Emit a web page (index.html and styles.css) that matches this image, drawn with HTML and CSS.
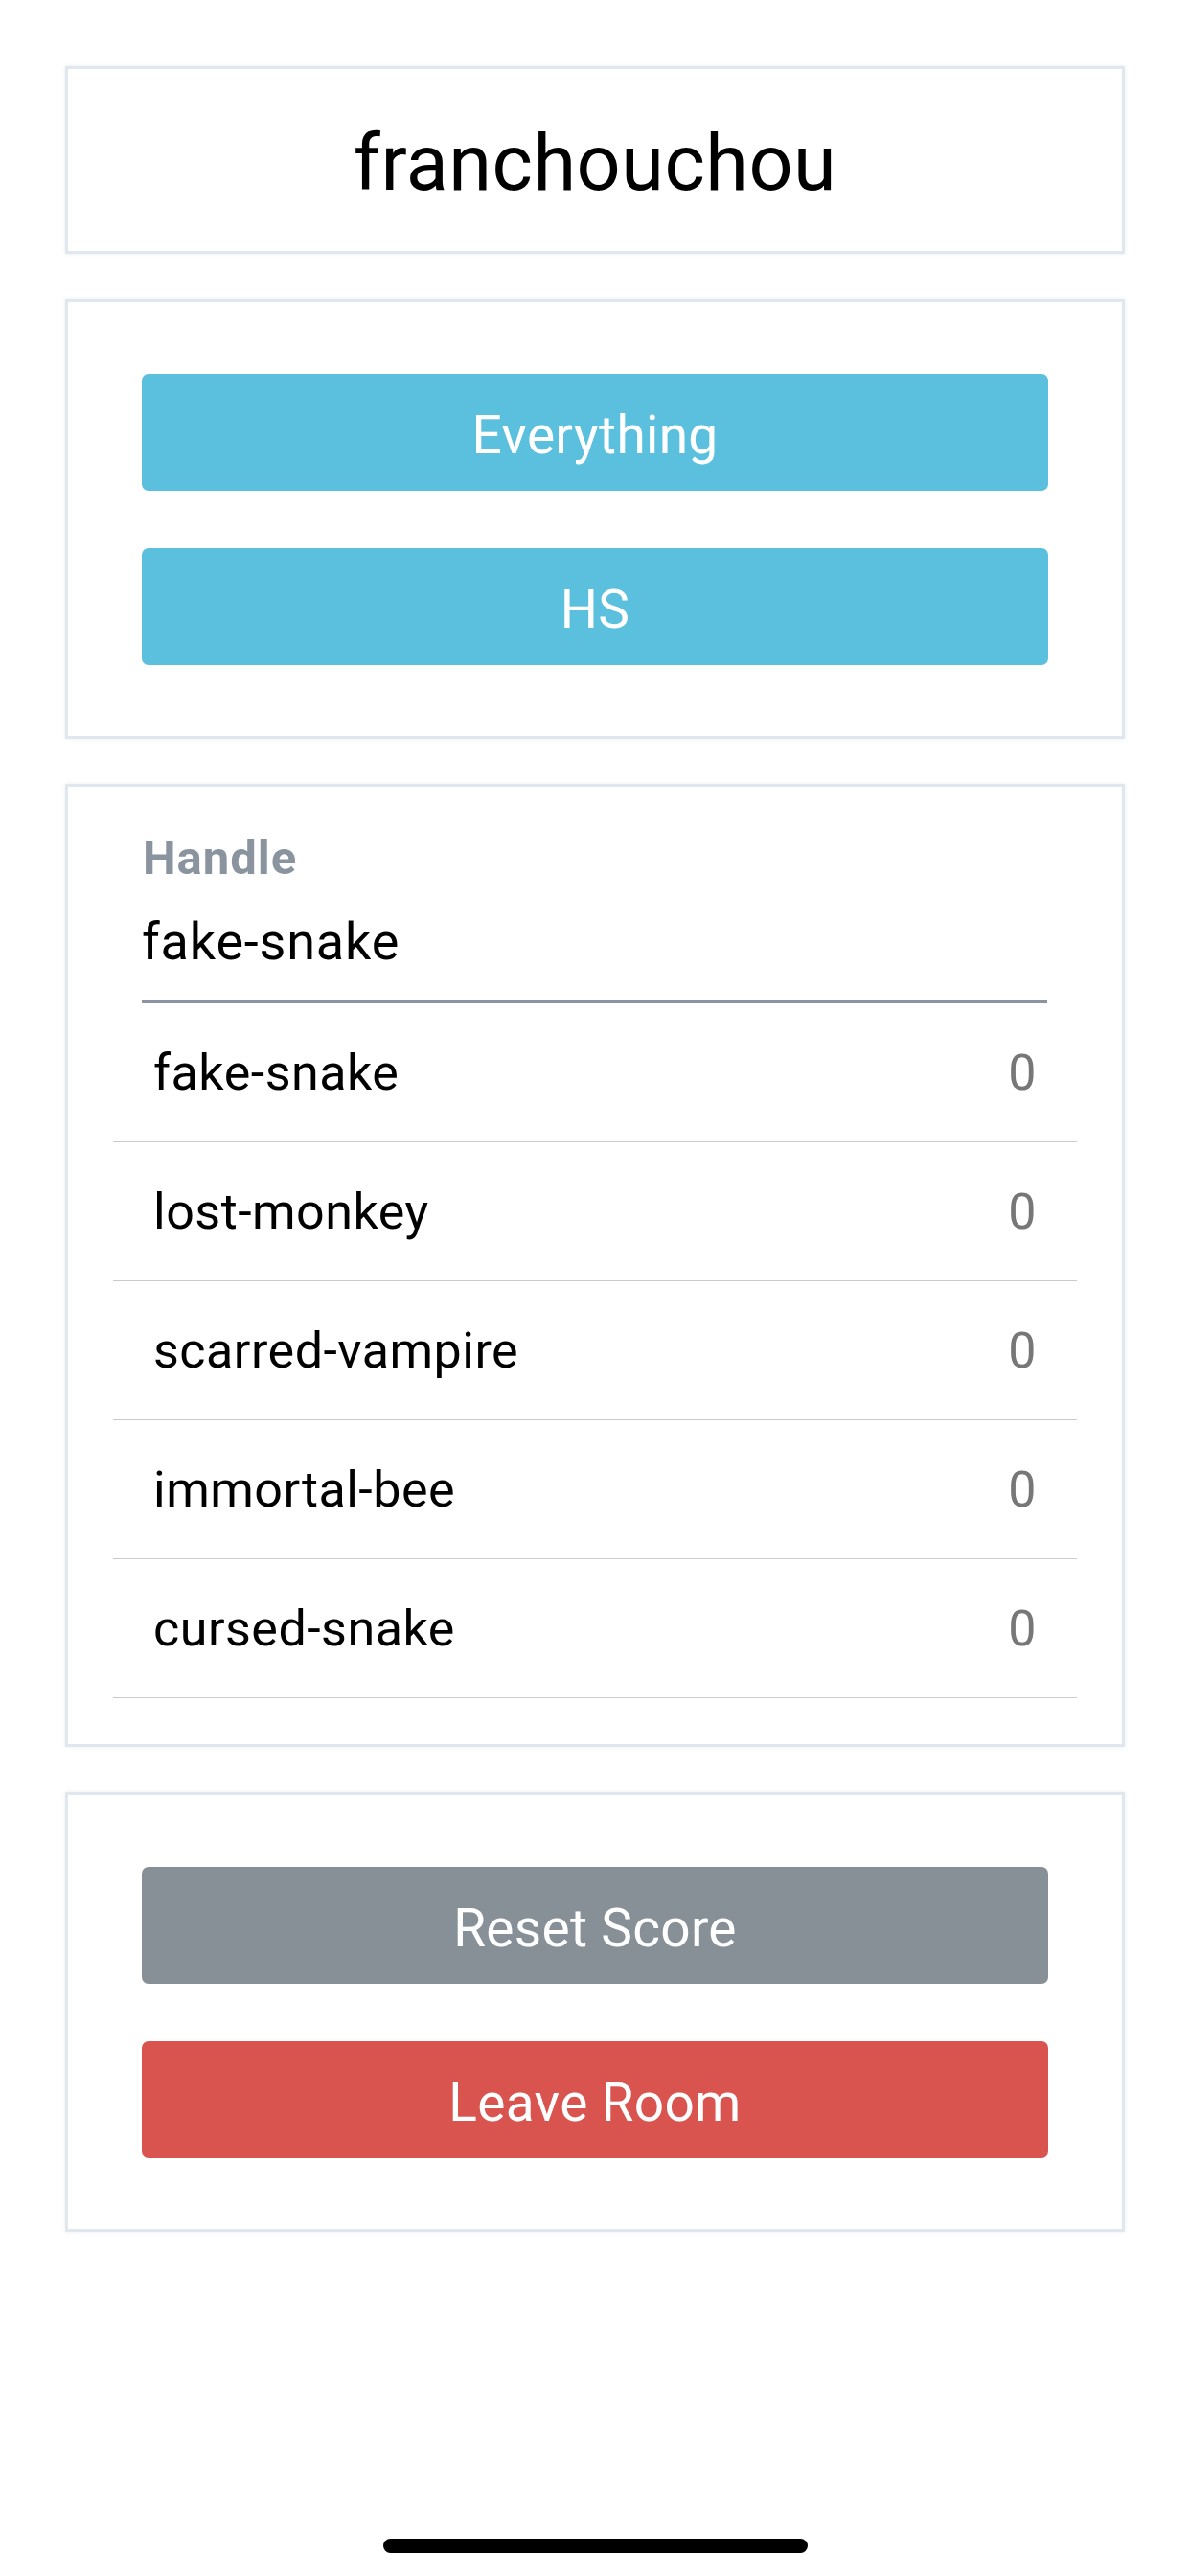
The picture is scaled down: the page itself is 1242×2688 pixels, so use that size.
FILE: index.html
```html
<!DOCTYPE html>
<html lang="en">
<head>
<meta charset="utf-8">
<title>franchouchou</title>
<link rel="stylesheet" href="styles.css">
</head>
<body>
<main class="page">
  <section class="card card-title">
    <h1 class="room-name">franchouchou</h1>
  </section>

  <section class="card card-buttons">
    <button class="btn btn-info">Everything</button>
    <button class="btn btn-info">HS</button>
  </section>

  <section class="card card-players">
    <div class="form">
      <label class="field-label" for="handle">Handle</label>
      <input class="field-input" id="handle" type="text" value="fake-snake">
    </div>
    <ul class="players">
      <li class="player"><span class="player-name">fake-snake</span><span class="player-score">0</span></li>
      <li class="player"><span class="player-name">lost-monkey</span><span class="player-score">0</span></li>
      <li class="player"><span class="player-name">scarred-vampire</span><span class="player-score">0</span></li>
      <li class="player"><span class="player-name">immortal-bee</span><span class="player-score">0</span></li>
      <li class="player"><span class="player-name">cursed-snake</span><span class="player-score">0</span></li>
    </ul>
  </section>

  <section class="card card-buttons">
    <button class="btn btn-secondary">Reset Score</button>
    <button class="btn btn-danger">Leave Room</button>
  </section>
</main>
<div class="home-indicator"></div>
</body>
</html>
```

FILE: styles.css
```css
* {
  box-sizing: border-box;
}

html, body {
  margin: 0;
  padding: 0;
  background: #ffffff;
}

body {
  font-family: Roboto, "Liberation Sans", Arial, sans-serif;
  color: #000;
  width: 1242px;
  height: 2688px;
  position: relative;
  overflow: hidden;
}

.page {
  padding: 69px 68px 0 68px;
  display: flex;
  flex-direction: column;
  gap: 47px;
}

.card {
  border: 3px solid #e1e7ee;
  box-shadow: 0 0 4px rgba(0, 0, 0, 0.08);
  background: #fff;
}

.card-title {
  height: 196px;
  padding-top: 8px;
}

.room-name {
  margin: 0;
  font-size: 81px;
  font-weight: 400;
  letter-spacing: 0.5px;
  line-height: 182px;
  text-align: center;
}

.card-buttons {
  display: flex;
  flex-direction: column;
  gap: 60px;
  padding: 75px 77px 74px 77px;
}

.btn {
  display: block;
  width: 100%;
  height: 122px;
  border: none;
  border-radius: 7px;
  padding: 6px 0 0;
  font-family: Roboto, "Liberation Sans", Arial, sans-serif;
  font-size: 55px;
  font-weight: 400;
  letter-spacing: 0.3px;
  line-height: 116px;
  color: #fff;
  text-align: center;
}

.btn-info {
  background: #5bc0de;
}

.btn-secondary {
  background: #878f97;
}

.btn-danger {
  background: #d9534f;
}

.card-players {
  padding: 47px 47px 48px 47px;
}

.form {
  padding: 0 31px 0 30px;
}

.field-label {
  display: block;
  font-size: 49px;
  font-weight: 700;
  letter-spacing: 1px;
  line-height: 56px;
  color: #8a949f;
  padding-left: 1px;
}

.field-input {
  display: block;
  width: 100%;
  margin-top: 26px;
  height: 97px;
  padding: 0 0 30px 0;
  border: none;
  border-bottom: 3px solid #8a95a1;
  font-family: Roboto, "Liberation Sans", Arial, sans-serif;
  font-size: 54px;
  letter-spacing: 0.8px;
  line-height: 64px;
  color: #000;
  background: transparent;
  outline: none;
}

.players {
  list-style: none;
  margin: 0;
  padding: 0;
}

.player {
  display: flex;
  justify-content: space-between;
  align-items: center;
  height: 145px;
  padding: 2px 42px 0 42px;
  border-bottom: 1px solid #cbcbcb;
  font-size: 52px;
  letter-spacing: 0.5px;
  line-height: 142px;
}

.player-score {
  color: #777;
}

.home-indicator {
  position: absolute;
  left: 400px;
  bottom: 24px;
  width: 443px;
  height: 15px;
  border-radius: 8px;
  background: #000;
}
```
